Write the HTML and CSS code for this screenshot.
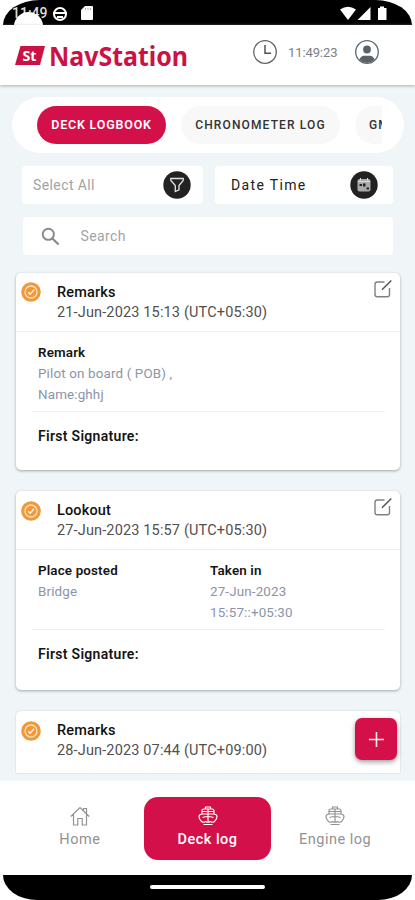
FILE: index.html
```html
<!DOCTYPE html>
<html lang="en">
<head>
<meta charset="utf-8">
<title>NavStation</title>
<link rel="stylesheet" href="styles.css">
</head>
<body>
<svg class="defs" width="0" height="0" aria-hidden="true">
  <symbol id="check" viewBox="0 0 20 20"><circle cx="10" cy="10" r="9.8" fill="#f1993a"/><circle cx="10" cy="10" r="6" fill="none" stroke="#fde3c3" stroke-width="1.3"/><path d="M7.2 10.2l2 2 4-4.6" fill="none" stroke="#fff0dc" stroke-width="1.4"/></symbol>
  <symbol id="edit" viewBox="0 0 20 20"><path d="M11.5 3H4.2Q2 3 2 5.200V15.500Q2 17.700 4.200 17.700H14.300Q16.500 17.700 16.500 15.500V9" fill="none" stroke="#808080" stroke-width="1.400"/><path d="M9 10.800L18.300 1.500" stroke="#555" stroke-width="1.500"/></symbol>
  <symbol id="ship" viewBox="0 0 20 20"><g fill="none" stroke="currentColor" stroke-width="1.200" stroke-linejoin="round"><path d="M7.500 3V1h5v2M4 8V5Q4 3 6 3h8q2 0 2 2v3M3.500 15.500Q1 13 1 10.500 1 8.500 4 8h12q3 .5 3 2.500 0 2.500-2.500 5M10 3v13M4.500 5.500h11M4.500 11.500Q10 9.500 15.500 11.500M3.500 15.500q2 1.500 4 0 2.500 1.500 5 0 2 1.500 4 0M5.500 18.500h9"/></g></symbol>
</svg>
<div class="phone">
  <div class="status">
    <span class="clock">11:49</span>
    <span class="hole"></span>
    <svg class="face" viewBox="0 0 16 16"><circle cx="8" cy="8" r="6" fill="none" stroke="#fff" stroke-width="2"/><path d="M1 7h14M5 11h6" stroke="#fff" stroke-width="2"/></svg>
    <svg class="sd" viewBox="0 0 12 14"><path d="M4 0h7q1 0 1 1v12q0 1-1 1H1q-1 0-1-1V4z" fill="#fff"/><path d="M4.500 2v2M7 2v2M9.500 2v2" stroke="#aaa"/></svg>
    <svg class="signals" viewBox="0 0 48 16"><path d="M0 4.500Q8 -1 16 4.500L8 15zM17.500 15L30.500 2V15zM38 3h2V1.500h4V3h2.500v12H38z" fill="#fff"/></svg>
  </div>
  <header>
    <svg class="logo" viewBox="0 0 178 36"><path d="M5.500 9H30L25 28H0z" fill="#cc1244"/><text class="mark" x="7.500" y="23.500" textLength="14" lengthAdjust="spacingAndGlyphs">St</text><text class="brand" x="34" y="28.500" textLength="139" lengthAdjust="spacingAndGlyphs">NavStation</text></svg>
    <svg class="watch" viewBox="0 0 24 24"><circle cx="12" cy="12" r="11.300" fill="none" stroke="#606569" stroke-width="1.300"/><path d="M12 5v8.300h6" fill="none" stroke="#50555a" stroke-width="1.500"/></svg>
    <span class="time">11:49:23</span>
    <svg class="user" viewBox="0 0 24 24"><circle cx="12" cy="12" r="11.300" fill="none" stroke="#606b72" stroke-width="1.300"/><circle cx="12" cy="9.500" r="3.900" fill="#586369"/><path d="M4.300 19.500Q6 15.700 9 15.700h6q3 0 4.700 3.800Q16 23 12 23T4.300 19.500z" fill="#586369"/></svg>
  </header>
  <main>
    <nav class="tabs"><div class="track"><span class="tab on">DECK LOGBOOK</span><span class="tab">CHRONOMETER LOG</span><span class="tab">GM</span></div></nav>
    <div class="filters">
      <div class="field select"><span>Select All</span><svg viewBox="0 0 28 28"><circle cx="14" cy="14" r="13.700" fill="#222"/><path d="M7.800 7.500h12.400v2L16 14.500v4.300l-3.700 1.700v-6L7.800 9.500z" fill="none" stroke="#e4e4e4" stroke-width="1.300"/></svg></div>
      <div class="field date"><span>Date Time</span><svg viewBox="0 0 28 28"><circle cx="14" cy="14" r="13.700" fill="#222"/><rect x="7.500" y="8" width="13" height="12.500" rx="2" fill="#aaa"/><path d="M8 10.500h12M10.500 7v2.500M17.500 7v2.500" stroke="#ddd"/><path d="M9.500 13h2.500v2H9.500zM13 12.500h2.500v3H13zM16.500 16.500h2.500v2h-2.500z" fill="#222"/></svg></div>
    </div>
    <div class="field search"><svg viewBox="0 0 20 20"><circle cx="7.700" cy="7.700" r="5.900" fill="none" stroke="#888" stroke-width="2"/><path d="M12 12l6.500 6.500" stroke="#888" stroke-width="2.300"/></svg><span>Search</span></div>

    <section class="card">
      <div class="top"><svg class="check"><use href="#check"/></svg><div class="head"><b>Remarks</b><span>21-Jun-2023 15:13 (UTC+05:30)</span></div><svg class="edit"><use href="#edit"/></svg></div>
      <div class="body"><div class="col"><b>Remark</b><span>Pilot on board ( POB) ,</span><span>Name:ghhj</span></div></div>
      <div class="sign">First Signature:</div>
    </section>
    <section class="card">
      <div class="top"><svg class="check"><use href="#check"/></svg><div class="head"><b>Lookout</b><span>27-Jun-2023 15:57 (UTC+05:30)</span></div><svg class="edit"><use href="#edit"/></svg></div>
      <div class="body"><div class="col"><b>Place posted</b><span>Bridge</span></div><div class="col"><b>Taken in</b><span>27-Jun-2023</span><span>15:57::+05:30</span></div></div>
      <div class="sign">First Signature:</div>
    </section>
    <section class="card">
      <div class="top"><svg class="check"><use href="#check"/></svg><div class="head"><b>Remarks</b><span>28-Jun-2023 07:44 (UTC+09:00)</span></div></div>
    </section>
    <div class="fab"><svg viewBox="0 0 18 18"><path d="M9 1v16M1 9h16" stroke="#ffe9e0" stroke-width="1.700"/></svg></div>
  </main>
  <footer>
    <div class="item"><svg viewBox="0 0 20 20"><path d="M.8 10.500L10 1.500l9.200 9M3.500 8.500V19h4.300v-6.500h4.400V19h4.300V8.500M13.500 4.500V2.500h3v5" fill="none" stroke="currentColor" stroke-width="1.200"/></svg><span>Home</span></div>
    <div class="item active"><svg><use href="#ship"/></svg><span>Deck log</span></div>
    <div class="item"><svg><use href="#ship"/></svg><span>Engine log</span></div>
  </footer>
  <div class="gesture"><i></i></div>
</div>
</body>
</html>
```
FILE: styles.css
```css
* { box-sizing: border-box; }
body { margin: 0; background: #fff; font-family: Roboto, "Liberation Sans", sans-serif; }
svg { display: block; flex: none; }
.defs { position: absolute; }
.phone { width: 415px; height: 900px; overflow: hidden; display: flex; flex-direction: column; }

.status { position: relative; height: 25px; margin: 0 0 0 3px; width: 409px; background: #000; border-radius: 38px 38px 0 0 / 26px 26px 0 0; display: flex; align-items: center; padding-left: 9px; overflow: hidden; flex: none; }
.clock { width: 38px; color: #ddd; font-size: 14px; font-weight: 500; line-height: 26px; white-space: nowrap; }
.hole { position: absolute; left: 11px; top: 12px; width: 29px; height: 29px; border-radius: 50%; background: #fff; }
.face { width: 16px; height: 16px; margin-left: 2px; margin-top: 2px; }
.sd { width: 12px; height: 14px; margin-left: 13px; margin-top: 1px; }
.signals { width: 48px; height: 16px; margin-left: auto; margin-right: 24px; }

header { height: 60px; flex: none; display: flex; align-items: center; padding: 0 36px 6px 15px; background: #fff; box-shadow: 0 1px 3px #a9aeb2; position: relative; z-index: 1; }
.logo { width: 178px; height: 36px; margin-top: 5px; }
.mark { font: 700 15px "Open Sans", sans-serif; fill: #fff; }
.brand { font: 700 26.500px "Noto Sans", sans-serif; fill: #cc1244; }
.watch { width: 24px; height: 24px; margin: -1px 0 0 60px; }
.time { font-size: 13px; color: #7c8084; width: 50px; margin-left: 11px; letter-spacing: -.1px; white-space: nowrap; }
.user { width: 24px; height: 24px; margin: -1px 0 0 auto; }

main { position: relative; height: 696px; flex: none; background: #f0f5f8; padding: 13px 15px 0 16px; overflow: hidden; }
.tabs { height: 56px; margin: -1px -4px 0 -4px; border-radius: 28px; background: #fff; padding: 9px 22px 10px 25px; }
.track { display: flex; gap: 15px; overflow: hidden; height: 38px; }
.tab { flex: none; height: 38px; border-radius: 19px; line-height: 38px; text-align: center; font-size: 12px; font-weight: 500; color: #333; background: #f8f8f8; letter-spacing: 1.130px; width: 129px; white-space: nowrap; }
.tab.on { background: #d4104a; color: #fff; font-weight: 600; font-size: 12.500px; letter-spacing: .8px; }
.tab:nth-child(2) { width: 159px; }
.tab:nth-child(3) { text-align: left; padding-left: 14px; }
.filters { display: flex; gap: 12px; padding: 13px 7px 0 6px; }
.field { background: #fff; height: 38px; border-radius: 4px; display: flex; align-items: center; font-size: 14px; color: #a3a3a3; }
.filters svg { width: 28px; height: 28px; }
.select { width: 181px; padding: 0 12px 0 11px; justify-content: space-between; letter-spacing: .4px; }
.date { flex: 1; padding: 0 15px 0 16px; justify-content: space-between; color: #222; letter-spacing: 1.350px; }
.search { margin: 13px 7px 0 7px; padding-left: 18px; gap: 20.500px; letter-spacing: .4px; }
.search svg { width: 19px; height: 19px; }

.card { width: 384px; height: 198px; margin-top: 21px; background: #fff; border-radius: 5px; box-shadow: 0 1px 3px #9ea4a8; }
.search + .card { margin-top: 18px; height: 197px; }
.card:nth-of-type(2) { height: 199px; }
.card:nth-of-type(3) { height: 62px; border-radius: 5px 5px 0 0; box-shadow: 0 0 2px #c5cacc; }
.top { height: 59px; border-bottom: 1px solid #f0f0f1; display: flex; padding: 10px 7px 0 5px; color: #505050; }
.card:nth-of-type(3) .top { border: 0; }
.check { width: 20px; height: 20px; }
.search + .card .check { margin-top: -1px; }
.edit { width: 20px; height: 20px; margin: -4px 0 0 auto; }
.head { margin-left: 16px; display: flex; flex-direction: column; font-size: 14.500px; line-height: 20px; white-space: nowrap; letter-spacing: .150px; }
b { font-weight: 500; color: #111; }
.body { height: 80px; margin: 0 15px 0 16px; padding: 10px 0 0 6px; display: grid; grid-template-columns: 172px 1fr; align-content: start; border-bottom: 1px solid #f0f0f1; line-height: 21px; font-size: 13.400px; letter-spacing: .150px; color: #8b94a8; }
.col { display: flex; flex-direction: column; }
.col b, .sign { font-weight: 600; color: #151515; }
.sign { padding: 14px 0 0 22px; font-size: 14px; letter-spacing: .3px; line-height: 20px; }
.fab { position: absolute; left: 355px; top: 633px; width: 42px; height: 42px; border-radius: 7px; background: #d4104a; display: grid; place-items: center; box-shadow: 0 2px 5px #0006; }
.fab svg { width: 17px; height: 17px; }

footer { flex: none; padding: 16px 16px 0; display: flex; background: #fff; height: 94px; }
.item { width: 128px; height: 63px; display: flex; flex-direction: column; align-items: center; color: #929292; font-size: 14.500px; line-height: 20px; letter-spacing: .5px; gap: 4px; padding-top: 9px; }
.item svg { width: 20px; height: 20px; }
.active { background: #d4104a; color: #fff; border-radius: 14px; font-weight: 500; }
.gesture { height: 25px; width: 409px; margin-left: 3px; background: #000; border-radius: 0 0 34px 34px / 0 0 25px 25px; padding-top: 10px; flex: none; }
.gesture i { display: block; width: 115px; height: 4px; border-radius: 2px; background: #fff; margin-left: 147px; }
```
